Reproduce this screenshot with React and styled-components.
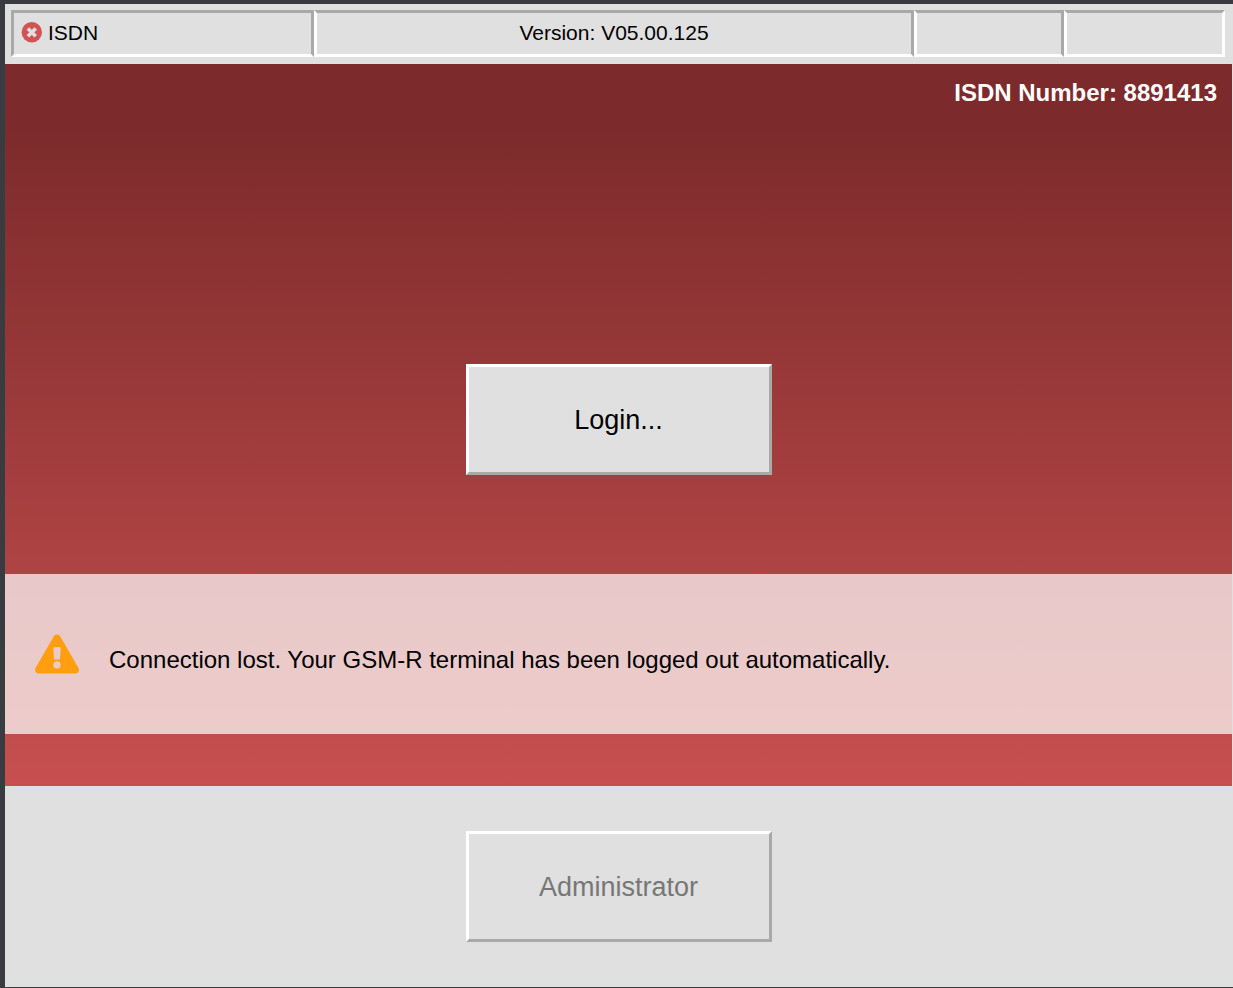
import React from "react";
import styled, { createGlobalStyle } from "styled-components";

const GlobalStyle = createGlobalStyle`
  * { box-sizing: border-box; }
  body {
    margin: 0;
    background: #e0e0e0;
    color: #000;
    font-family: "Liberation Sans", Arial, sans-serif;
  }
`;

const Frame = styled.div`
  display: flex;
  flex-direction: column;
  min-height: 100vh;
  padding-right: 1px;
  background: #e0e0e0;
  border: solid #3a3b41;
  border-width: 4px 0 1px 5px;
`;

const StatusBar = styled.header`
  display: grid;
  grid-template-columns: 303fr 600fr 150fr 161fr;
  padding: 6px 7px 7px 6px;
`;

const StatusCell = styled.div`
  display: flex;
  align-items: center;
  justify-content: ${({ $align }) => $align || "flex-start"};
  gap: 6px;
  height: 47px;
  padding: 0 7px 2px;
  border: 3px solid;
  border-color: #a9a9a9 #a9a9a9 #fff #fff;
  font-size: 21px;
  line-height: 24px;

  &:first-child { border-left-color: #a9a9a9; }
  &:last-child { border-right-color: #fff; }
`;

const StatusIcon = styled.svg`
  flex: none;
  width: 21px;
  height: 21px;
  fill: #d25353;
  stroke: #e0e0e0;
`;

const Main = styled.main`
  flex: 1;
  display: flex;
  flex-direction: column;
  padding-bottom: 52px;
  background: linear-gradient(to bottom, #7c2a2b 8%, #c7504f 100%);
`;

const NumberLine = styled.div`
  padding: 14px 15px 0;
  color: #fff;
  font-size: 24px;
  font-weight: bold;
  line-height: 30px;
  text-align: right;
`;

const LoginArea = styled.div`
  flex: 1;
  display: flex;
  align-items: center;
  justify-content: center;
  padding-top: 157px;
`;

const PanelButton = styled.button`
  width: 306px;
  height: 111px;
  padding: 0;
  border: 3px solid;
  border-color: #fff #a9a9a9 #a9a9a9 #fff;
  border-radius: 0;
  background: #e0e0e0;
  color: #000;
  font-family: inherit;
  font-size: 27px;
  line-height: 32px;

  &:disabled { color: #777; }
`;

const Notice = styled.section`
  display: flex;
  align-items: center;
  gap: 30px;
  min-height: 160px;
  padding: 0 30px;
  background: rgba(255, 255, 255, 0.71);
`;

const WarningIcon = styled.svg`
  flex: none;
  width: 44px;
  height: 40px;
  fill: #ff9f10;
`;

const NoticeText = styled.p`
  margin: 0;
  padding-top: 12px;
  font-size: 24px;
  line-height: 28px;
`;

const Footer = styled.footer`
  display: flex;
  justify-content: center;
  padding: 45px 0;
`;

export default function App() {
  return (
    <>
      <GlobalStyle />
      <Frame>
        <StatusBar>
          <StatusCell>
            <StatusIcon viewBox="0 0 21 21" aria-hidden="true">
              <circle cx="10.8" cy="10.3" r="10.2" stroke="none" />
              <path d="M6.900 6.400l7.800 7.800M14.700 6.400l-7.800 7.800" strokeWidth="3.600" />
            </StatusIcon>
            <span>ISDN</span>
          </StatusCell>
          <StatusCell $align="center">Version: V05.00.125</StatusCell>
          <StatusCell />
          <StatusCell />
        </StatusBar>
        <Main>
          <NumberLine>ISDN Number: 8891413</NumberLine>
          <LoginArea>
            <PanelButton type="button">Login...</PanelButton>
          </LoginArea>
          <Notice role="alert">
            <WarningIcon viewBox="0 0 576 512" aria-hidden="true">
              <path
                fillRule="evenodd"
                d="M569.5 440C588 472 564.8 512 528 512H48C11.100 512-12 472 6.500 440L246.400 24C264.900-8 311.100-8 329.600 24ZM252 169C245 169 240 174 240.500 181L248 315C248.500 322 253 327 260 327H316C323 327 327.500 322 328 315L335.500 181C336 174 331 169 324 169ZM288 352A47 47 0 1 0 288 446A47 47 0 1 0 288 352Z"
              />
            </WarningIcon>
            <NoticeText>
              Connection lost. Your GSM-R terminal has been logged out automatically.
            </NoticeText>
          </Notice>
        </Main>
        <Footer>
          <PanelButton type="button" disabled>Administrator</PanelButton>
        </Footer>
      </Frame>
    </>
  );
}
